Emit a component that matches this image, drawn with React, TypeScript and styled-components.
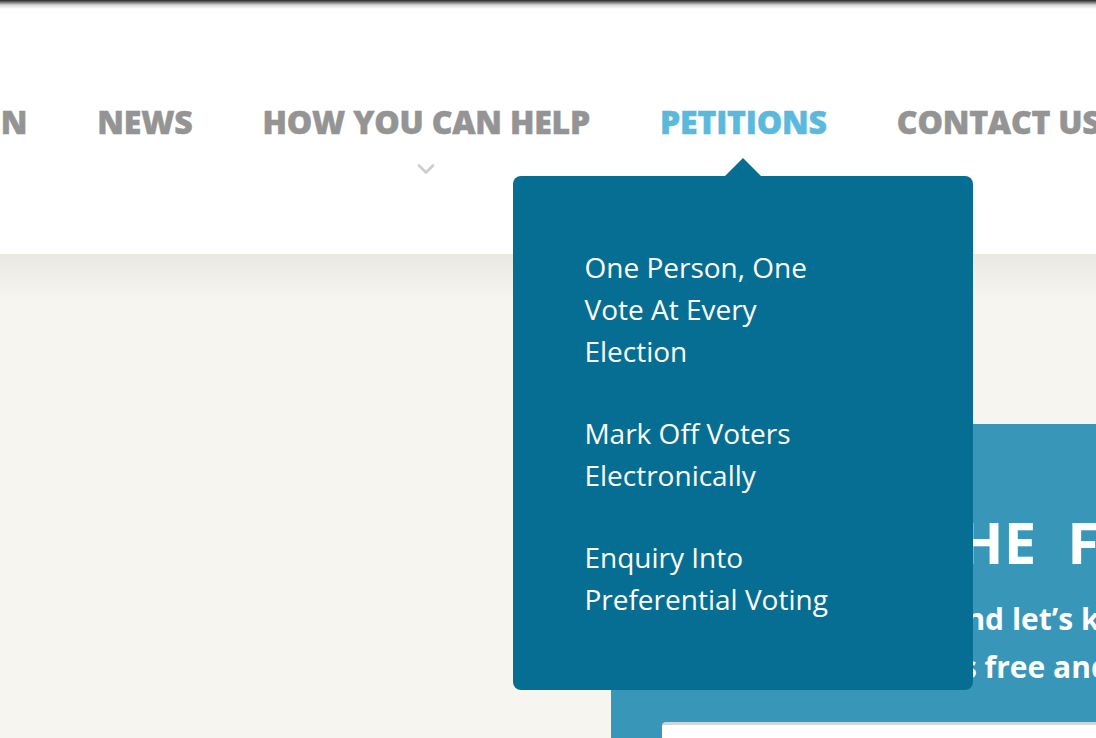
import React from 'react';
import styled, { createGlobalStyle } from 'styled-components';
import { ChevronDown } from 'lucide-react';

const GlobalStyle = createGlobalStyle`
  html, body {
    margin: 0;
    padding: 0;
    background: #f6f5ef;
    font-family: 'Open Sans', 'Noto Sans', sans-serif;
  }
`;

interface NavLink {
  label: string;
  active?: boolean;
  hasChildren?: boolean;
}

const links: NavLink[] = [
  { label: 'CAMPAIGN' },
  { label: 'NEWS' },
  { label: 'HOW YOU CAN HELP', hasChildren: true },
  { label: 'PETITIONS', active: true },
  { label: 'CONTACT US' },
];

const petitions = [
  'One Person, One Vote At Every Election',
  'Mark Off Voters Electronically',
  'Enquiry Into Preferential Voting',
];

export default function App() {
  return (
    <>
      <GlobalStyle />
      <Page>
        <Header>
          <Nav>
            {links.map((link) => (
              <NavItem key={link.label}>
                <NavLabel $active={link.active}>{link.label}</NavLabel>
                {link.hasChildren && (
                  <Caret>
                    <ChevronDown size={28} strokeWidth={2.4} />
                  </Caret>
                )}
                {link.active && (
                  <Dropdown>
                    {petitions.map((p) => (
                      <DropdownLink key={p} href="#">
                        {p}
                      </DropdownLink>
                    ))}
                  </Dropdown>
                )}
              </NavItem>
            ))}
          </Nav>
        </Header>
        <Main>
          <SignUp>
            <SignUpTitle>JOIN THE FIGHT</SignUpTitle>
            <SignUpText>
              Sign up to updates and let’s keep in touch,
              <br />
              it takes a minute, it’s free and easy
            </SignUpText>
            <EmailInput placeholder="" />
          </SignUp>
        </Main>
      </Page>
    </>
  );
}

const Page = styled.div`
  width: 100%;
  height: 738px;
  overflow: hidden;
  display: flex;
  flex-direction: column;
`;

const Header = styled.header`
  position: relative;
  z-index: 2;
  height: 254px;
  flex-shrink: 0;
  background: linear-gradient(
    to bottom,
    #262626 0,
    #6b6b6b 2px,
    #d6d6d6 5px,
    #ffffff 9px
  );
`;

const Nav = styled.nav`
  display: flex;
  align-items: flex-start;
  gap: 70px;
  padding-top: 99px;
  margin-left: -151px;
  white-space: nowrap;
`;

const NavItem = styled.div`
  position: relative;
  display: flex;
  flex-direction: column;
  align-items: center;
`;

const NavLabel = styled.a<{ $active?: boolean }>`
  font-size: 32px;
  line-height: 45px;
  font-weight: 800;
  letter-spacing: -0.2px;
  -webkit-text-stroke: 0.5px currentColor;
  color: ${(p) => (p.$active ? '#5bb9dd' : '#949494')};
  text-decoration: none;
  cursor: pointer;
`;

const Caret = styled.span`
  display: flex;
  margin-top: 11px;
  color: #cfcfcf;
`;

const Dropdown = styled.div`
  position: absolute;
  top: 77px;
  left: 50%;
  transform: translateX(-50%);
  width: 460px;
  box-sizing: border-box;
  padding: 70px 0 70px 71px;
  background: #066e92;
  border-radius: 8px;
  display: flex;
  flex-direction: column;
  gap: 40px;
  white-space: normal;

  &::before {
    content: '';
    position: absolute;
    top: -18px;
    left: 50%;
    margin-left: -18px;
    border-left: 18px solid transparent;
    border-right: 18px solid transparent;
    border-bottom: 18px solid #066e92;
  }
`;

const DropdownLink = styled.a`
  width: 270px;
  font-size: 28px;
  line-height: 42px;
  color: #ffffff;
  text-decoration: none;
`;

const Main = styled.main`
  flex: 1;
  background: linear-gradient(to bottom, #e9e8e1 0, #f6f5ef 45px);
  padding: 170px 0 0 611px;
`;

const SignUp = styled.section`
  width: 700px;
  height: 400px;
  box-sizing: border-box;
  padding: 83px 0 0 51px;
  background: #3896b9;
  color: #ffffff;
`;

const SignUpTitle = styled.h2`
  margin: 0 0 0 101px;
  font-size: 58px;
  line-height: 70px;
  font-weight: 700;
  word-spacing: 16px;
  white-space: nowrap;
`;

const SignUpText = styled.p`
  margin: 18px 0 31px;
  font-size: 30px;
  line-height: 48px;
  font-weight: 700;
  white-space: nowrap;
`;

const EmailInput = styled.input`
  display: block;
  width: 600px;
  height: 60px;
  box-sizing: border-box;
  border: none;
  border-top: 3px solid #cfd6da;
  border-radius: 4px;
  background: #ffffff;
  font-family: inherit;
`;
